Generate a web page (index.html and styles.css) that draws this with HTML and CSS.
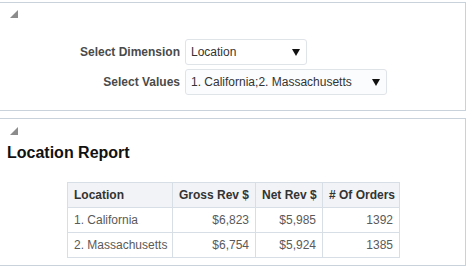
FILE: index.html
```html
<!DOCTYPE html>
<html lang="en">
<head>
    <meta charset="UTF-8">
    <title>Location Report</title>
    <link rel="stylesheet" href="styles.css">
</head>
<body>

    <!-- Prompts panel -->
    <div class="panel panel-prompts">
        <span class="toggle"></span>
        <div class="prompt-grid">
            <label class="prompt-label">Select Dimension</label>
            <div class="select select-short">
                <span>Location</span>
                <span class="arrow"></span>
            </div>
            <label class="prompt-label">Select Values</label>
            <div class="select select-long">
                <span>1. California;2. Massachusetts</span>
                <span class="arrow"></span>
            </div>
        </div>
    </div>

    <!-- Report panel -->
    <div class="panel panel-report">
        <span class="toggle"></span>
        <h2 class="report-title">Location Report</h2>
        <table class="report">
            <thead>
                <tr>
                    <th class="col-loc">Location</th>
                    <th class="col-gross">Gross Rev $</th>
                    <th class="col-net">Net Rev $</th>
                    <th class="col-orders"># Of Orders</th>
                </tr>
            </thead>
            <tbody>
                <tr>
                    <td>1. California</td>
                    <td class="num">$6,823</td>
                    <td class="num">$5,985</td>
                    <td class="num">1392</td>
                </tr>
                <tr>
                    <td>2. Massachusetts</td>
                    <td class="num">$6,754</td>
                    <td class="num">$5,924</td>
                    <td class="num">1385</td>
                </tr>
            </tbody>
        </table>
    </div>

</body>
</html>
```

FILE: styles.css
```css
body {
    margin: 0;
    padding-top: 2px;
    font-family: "Liberation Sans", Arial, sans-serif;
    font-size: 12px;
    background-color: #fff;
    color: #333;
}

.panel {
    width: 466px;
    border: 1px solid #c9d2db;
    border-left: none;
    background-color: #fff;
    box-sizing: border-box;
}

.toggle {
    display: block;
    width: 0;
    height: 0;
    margin-left: 10px;
    border-left: 8px solid transparent;
    border-bottom: 8px solid #8c8c8c;
}

.panel-prompts {
    height: 109px;
    padding-top: 7px;
}

.prompt-grid {
    display: grid;
    grid-template-columns: auto auto;
    column-gap: 5px;
    row-gap: 4px;
    justify-content: center;
    align-items: center;
    margin-top: 21px;
    padding-left: 2px;
}

.prompt-label {
    font-weight: bold;
    color: #4a4a4a;
    text-align: right;
}

.select {
    display: flex;
    align-items: center;
    justify-content: space-between;
    height: 26px;
    padding: 0 6px 0 5px;
    border: 1px solid #dfe4e9;
    border-radius: 3px;
    background-color: #fff;
    color: #333;
    box-sizing: border-box;
}

.select-short {
    width: 122px;
}

.select-long {
    width: 202px;
    background-color: #fbfcfd;
}

.arrow {
    width: 0;
    height: 0;
    border-left: 4px solid transparent;
    border-right: 4px solid transparent;
    border-top: 7px solid #111;
}

.panel-report {
    margin-top: 7px;
    height: 148px;
    padding-top: 8px;
}

.report-title {
    margin: 9px 0 0 7px;
    font-size: 16px;
    line-height: 18px;
    color: #111;
}

.report {
    margin: 20px 0 0 67px;
    border-collapse: collapse;
    table-layout: fixed;
    width: 332px;
}

.report th,
.report td {
    box-sizing: border-box;
    height: 25px;
    padding: 0 6px;
    border: 1px solid #d8dee5;
    text-align: left;
    white-space: nowrap;
}

.report th {
    font-weight: bold;
    color: #333;
    background-color: #f1f3f6;
}

.report td {
    color: #5a5a5a;
}

.report td.num {
    text-align: right;
}

.col-loc { width: 105px; }
.col-gross { width: 83px; }
.col-net { width: 67px; }
.col-orders { width: 77px; }
```
